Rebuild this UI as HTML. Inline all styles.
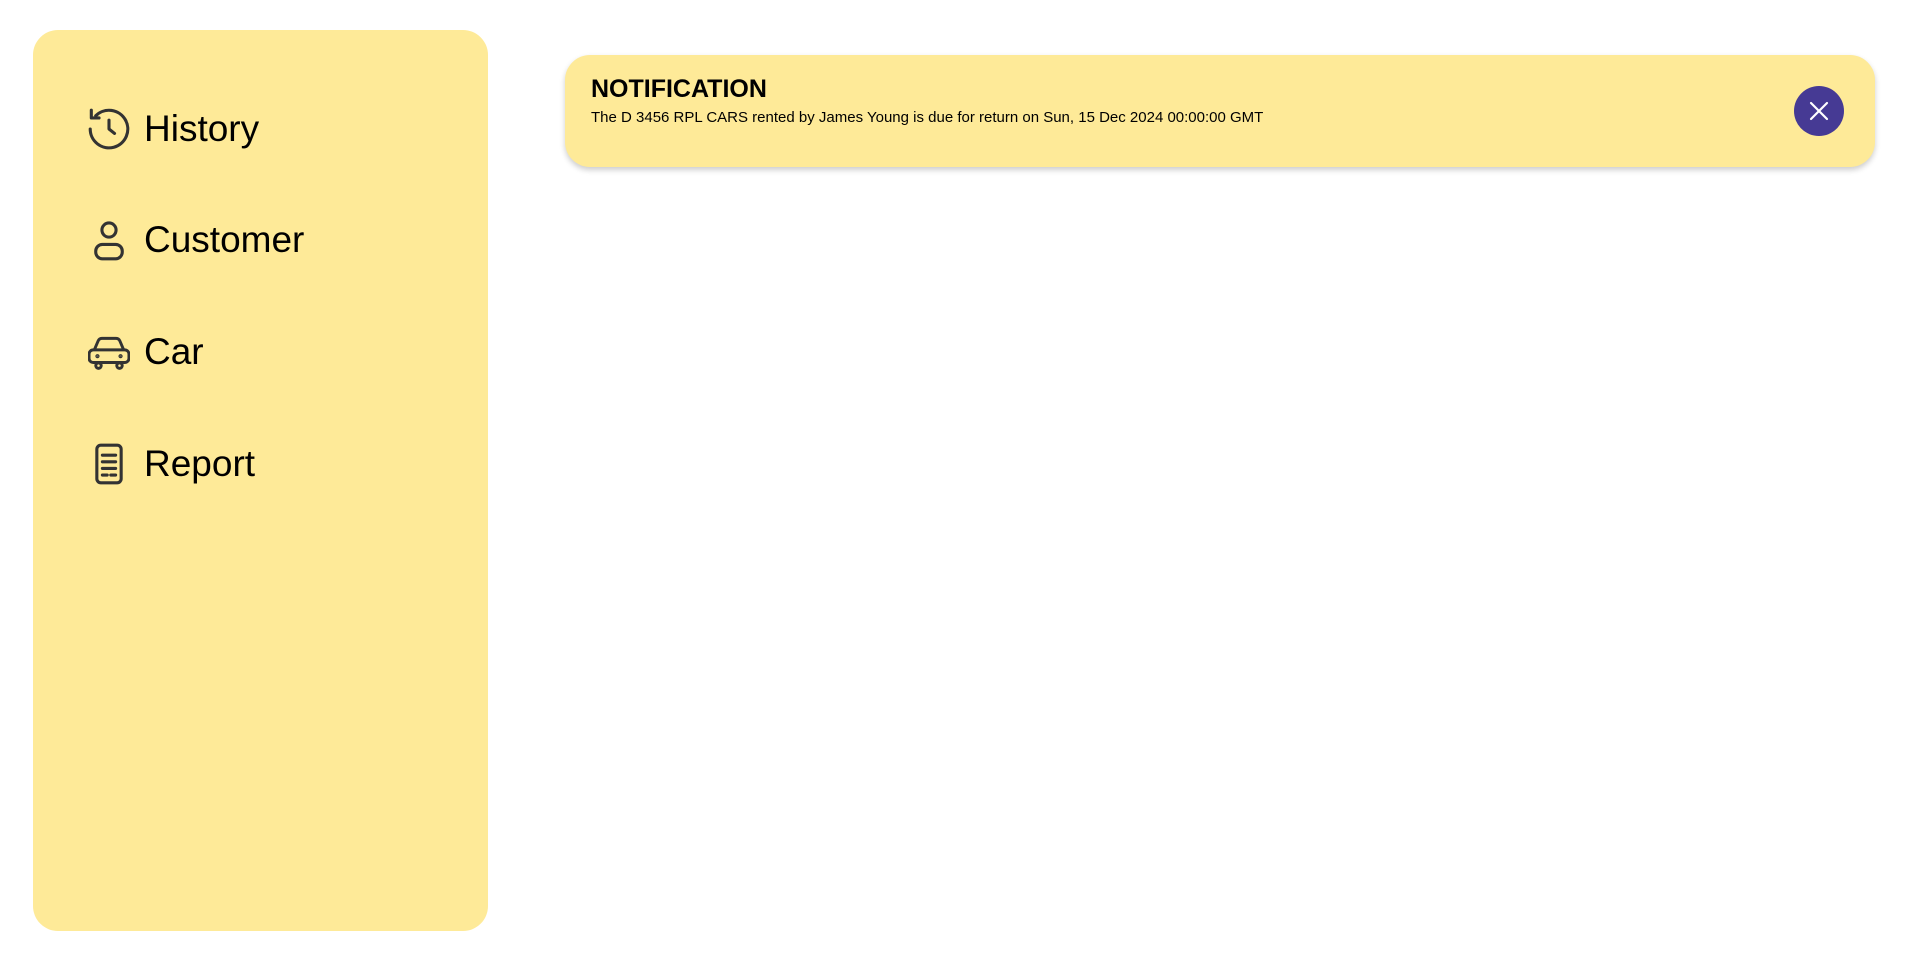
<!DOCTYPE html>
<html><head><style>
html,body{margin:0;padding:0;width:1920px;height:953px;background:#fff;font-family:"Liberation Sans",Arial,sans-serif;overflow:hidden}
.side{position:absolute;left:33px;top:30px;width:455px;height:901px;background:#feea98;border-radius:25px}
.item{position:absolute;left:55px;height:44px;display:flex;align-items:center;font-size:37px;color:#000}
.item svg{width:42px;height:42px;margin-right:14px;flex:none}
.card{position:absolute;left:565px;top:55px;width:1310px;height:112px;background:#feea98;border-radius:25px;box-shadow:0 3px 6px rgba(0,0,0,.2)}
.t{position:absolute;left:26px;top:20px;font-size:25px;font-weight:bold;color:#000}
.m{position:absolute;left:26px;top:54px;font-size:15px;color:#000}
.x{position:absolute;left:1229px;top:31px;width:50px;height:50px;border-radius:50%;background:#463a94}
</style></head><body>
<div class="side">
<div class="item" style="top:77px"><svg viewBox="2.5 2.5 19 19" fill="none" stroke="#333" stroke-width="1.4" stroke-linecap="round" stroke-linejoin="round"><path d="M3.5 12a8.5 8.5 0 1 0 2.5-6"/><path d="M4 3.5v3.5h3.5"/><path d="M12 8v4l2.5 2"/></svg>History</div>
<div class="item" style="top:188px"><svg viewBox="2.5 2.5 19 19" fill="none" stroke="#333" stroke-width="1.4"><circle cx="12" cy="7.5" r="3.2"/><rect x="6" y="14" width="12" height="6.5" rx="3"/></svg>Customer</div>
<div class="item" style="top:300px"><svg viewBox="2 2 20 20" fill="none" stroke="#333" stroke-width="1.4" stroke-linejoin="round"><path d="M5 11l1.8-4.2A2 2 0 0 1 8.6 5.5h6.8a2 2 0 0 1 1.8 1.3L19 11"/><rect x="2.5" y="11" width="19" height="6" rx="2"/><circle cx="7" cy="18.5" r="1.3"/><circle cx="17" cy="18.5" r="1.3"/><circle cx="6.5" cy="14" r=".3" fill="#333"/><circle cx="17.5" cy="14" r=".3" fill="#333"/></svg>Car</div>
<div class="item" style="top:412px"><svg viewBox="2.5 2.5 19 19" fill="none" stroke="#333" stroke-width="1.4" stroke-linecap="round"><rect x="6.5" y="3.5" width="11" height="17" rx="1.8"/><path d="M9 8h6M9 11h6M9 14h6M9 17h2.2M12.8 17h2.2"/></svg>Report</div>
</div>
<div class="card">
<div class="t">NOTIFICATION</div>
<div class="m">The D 3456 RPL CARS rented by James Young is due for return on Sun, 15 Dec 2024 00:00:00 GMT</div>
<div class="x"><svg width="50" height="50" viewBox="0 0 50 50"><path d="M17 17L33 33M33 17L17 33" stroke="#fff" stroke-width="2.2" stroke-linecap="round"/></svg></div>
</div>
</body></html>
